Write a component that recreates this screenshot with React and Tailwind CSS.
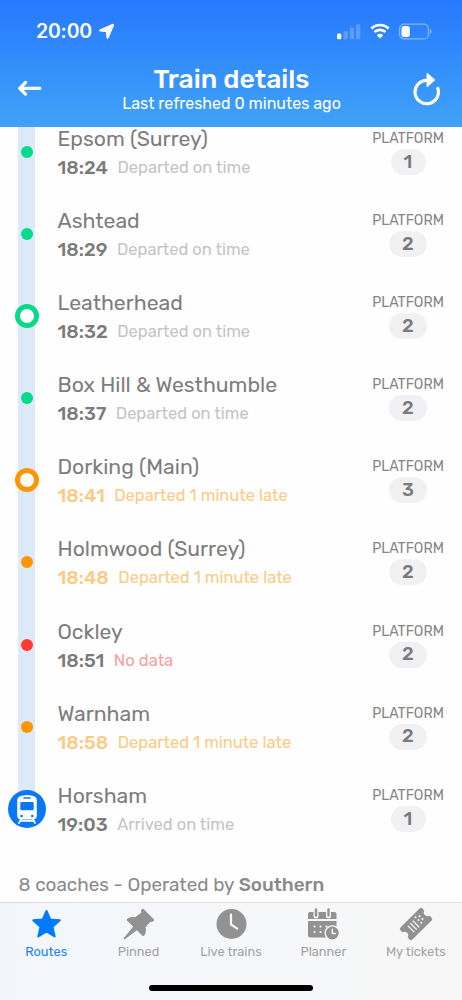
import React from "react";

const stops = [
  { name: "Epsom (Surrey)", time: "18:24", status: "Departed on time", platform: "1", tone: "green" },
  { name: "Ashtead", time: "18:29", status: "Departed on time", platform: "2", tone: "green" },
  { name: "Leatherhead", time: "18:32", status: "Departed on time", platform: "2", tone: "green", ring: true },
  { name: "Box Hill & Westhumble", time: "18:37", status: "Departed on time", platform: "2", tone: "green" },
  { name: "Dorking (Main)", time: "18:41", status: "Departed 1 minute late", platform: "3", tone: "orange", ring: true },
  { name: "Holmwood (Surrey)", time: "18:48", status: "Departed 1 minute late", platform: "2", tone: "orange" },
  { name: "Ockley", time: "18:51", status: "No data", platform: "2", tone: "red" },
  { name: "Warnham", time: "18:58", status: "Departed 1 minute late", platform: "2", tone: "orange" },
  { name: "Horsham", time: "19:03", status: "Arrived on time", platform: "1", tone: "green", last: true },
];

const dotColor = { green: "bg-[#08d98a]", orange: "bg-[#ff9500]", red: "bg-[#ff3b30]" };
const ringColor = { green: "border-[#08d98a]", orange: "border-[#ff9500]" };
const timeColor = { green: "text-[#7b7b7b]", orange: "text-[#fbcb83]", red: "text-[#7b7b7b]" };
const statusColor = { green: "text-[#c4c4c6]", orange: "text-[#fbcb83]", red: "text-[#f8a09c]" };

function TrainBadge() {
  return (
    <svg width="38" height="38" viewBox="0 0 38 38">
      <circle cx="19" cy="19" r="19" fill="#0a78f5" />
      <path d="M15 5.500q4-1 8 0 5.800.9 5.800 4.500v15.500q0 4-4 4H13.200q-4 0-4-4V10q0-3.600 5.800-4.500Z" fill="#fff" />
      <path d="M13 29.500 11 33M25 29.500 27 33M12.500 30.800h13" fill="none" stroke="#fff" strokeWidth="1.800" strokeLinecap="round" />
      <rect x="15.200" y="7.200" width="7.600" height="1.500" rx=".75" fill="#0a78f5" />
      <rect x="12.300" y="12" width="13.400" height="8.300" rx="1" fill="#0a78f5" />
      <circle cx="13.700" cy="26" r="1.300" fill="#0a78f5" />
      <circle cx="24.300" cy="26" r="1.300" fill="#0a78f5" />
    </svg>
  );
}

function Timeline({ stop }) {
  return (
    <div className="grid w-[38px] shrink-0 justify-items-center">
      <div className={`col-start-1 row-start-1 w-[16.5px] bg-[#dce9f9] ${stop.last ? "h-[20px]" : "h-full"}`} />
      <div className="col-start-1 row-start-1 flex h-[50px] items-center">
        {stop.last ? (
          <TrainBadge />
        ) : stop.ring ? (
          <div className={`size-6 rounded-full border-[5px] bg-white ${ringColor[stop.tone]}`} />
        ) : (
          <div className={`size-3 rounded-full ${dotColor[stop.tone]}`} />
        )}
      </div>
    </div>
  );
}

function StopRow({ stop }) {
  return (
    <li className="flex h-[82.1px] pr-[14px] pl-[7.5px]">
      <Timeline stop={stop} />
      <div className="flex-1 pl-3 whitespace-nowrap">
        <div className="h-6 text-[21.2px] leading-[23px] text-[#7d7d7d]">{stop.name}</div>
        <div className="flex h-[34px] items-center gap-[9.5px] leading-8">
          <span className={`text-[19px] font-medium ${timeColor[stop.tone]}`}>{stop.time}</span>
          <span className={`text-[16.5px] ${statusColor[stop.tone]}`}>{stop.status}</span>
        </div>
      </div>
      <div className="flex w-20 flex-col items-center">
        <div className="h-[22px] text-[14.1px] leading-6 text-[#858585]">PLATFORM</div>
        <div className={`flex h-[26px] items-center justify-center rounded-full bg-[#f1f1f3] text-[19px] font-medium text-[#7b7b7b] ${stop.platform === "1" ? "w-[35px]" : "w-[38px]"}`}>
          {stop.platform}
        </div>
      </div>
    </li>
  );
}

function StarIcon() {
  return (
    <svg width="32" height="32" viewBox="0 0 32 32">
      <path d="M16.500 3 20.200 11.500 29.800 12.300 22.500 18.800 24.700 28.500 16.500 23.400 8.300 28.500 10.500 18.800 3.200 12.300 12.800 11.500Z" fill="#007aff" stroke="#007aff" strokeWidth="2" strokeLinejoin="round" />
    </svg>
  );
}

function PinIcon() {
  return (
    <svg width="32" height="32" viewBox="0 0 32 32">
      <path d="M18.800 1.200q1-.9 2 0L30.800 11.200q.9 1-.1 1.900-1.600 1.200-3.600.8l-4.600 5.300q1.300 4.800-1.300 8.300-1 1-2 0l-5.300-5.300L1.500 31.500l-1-1L10.200 18.600 4.200 12.700q-1-1 0-2 3.200-2.200 7.900-1.400l6.100-4.500q-.5-2.300.6-3.600Z" fill="#929292" />
    </svg>
  );
}

function ClockIcon() {
  return (
    <svg width="32" height="32" viewBox="0 0 32 32">
      <circle cx="16.500" cy="16" r="15" fill="#929292" />
      <path d="M16 6.500v10l6.200 4.200" fill="none" stroke="#f7f7f8" strokeWidth="2.200" strokeLinecap="round" strokeLinejoin="round" />
    </svg>
  );
}

function PlannerIcon() {
  return (
    <svg width="32" height="32" viewBox="0 0 32 32">
      <path d="M1 11V6q0-2 2-2h24.500q2 0 2 2v5ZM1 13h28.500v14.500q0 2-2 2H3q-2 0-2-2Z" fill="#929292" />
      <path d="M9 2v6M21.500 2v6" stroke="#f7f7f8" strokeWidth="5" strokeLinecap="round" />
      <path d="M9 1.500v6M21.500 1.500v6" stroke="#929292" strokeWidth="2.400" strokeLinecap="round" />
      <g fill="#f7f7f8">
        <circle cx="7.500" cy="18.500" r="1.100" />
        <circle cx="13.500" cy="18.500" r="1.100" />
        <circle cx="19.500" cy="18.500" r="1.100" />
        <circle cx="7.500" cy="24" r="1.100" />
        <circle cx="13.500" cy="24" r="1.100" />
        <circle cx="25.300" cy="25" r="7.800" />
      </g>
      <circle cx="25.300" cy="25" r="6.400" fill="#929292" />
      <path d="M25.300 21.300v4.200h3" fill="none" stroke="#f7f7f8" strokeWidth="1.500" strokeLinecap="round" strokeLinejoin="round" />
    </svg>
  );
}

function TicketIcon() {
  return (
    <svg width="34" height="34" viewBox="0 0 34 34">
      <g transform="rotate(-45 17 17)">
        <path d="M3.500 8.500h27q2 0 2 2v2.800a3.800 3.800 0 0 0 0 7.400v2.800q0 2-2 2h-27q-2 0-2-2v-2.800a3.800 3.800 0 0 0 0-7.400v-2.800q0-2 2-2Z" fill="#929292" />
        <path d="M10 12.500v9M13.500 12.500v9M17 12.500v9" stroke="#f7f7f8" strokeWidth="1.300" />
        <path d="M21.500 11v12M25 13.200v7.500" stroke="#f7f7f8" strokeWidth="1.800" strokeDasharray="1.800 2.200" />
      </g>
    </svg>
  );
}

const tabs = [
  { label: "Routes", Icon: StarIcon, cls: "text-[#1b83f5]" },
  { label: "Pinned", Icon: PinIcon, cls: "text-[#a3a3a5]" },
  { label: "Live trains", Icon: ClockIcon, cls: "text-[#a3a3a5]" },
  { label: "Planner", Icon: PlannerIcon, cls: "text-[#a3a3a5]" },
  { label: "My tickets", Icon: TicketIcon, cls: "text-[#a3a3a5]" },
];

function StatusBar() {
  return (
    <div className="flex h-[62px] items-center justify-between pr-[30px] pl-9">
      <div className="flex items-center gap-[6px]">
        <span className="pt-[2px] font-['Inter','Roboto',sans-serif] text-[19.5px] font-semibold tracking-[-0.2px]">20:00</span>
        <svg width="17" height="17" viewBox="0 0 17 17">
          <path d="M14.800 1.200 1.600 7q-.6.6.2 1l6.700.5.500 6.600q.5.800 1.100.1L15.700 2q.1-.9-.9-.8Z" fill="#fff" stroke="#fff" strokeWidth="1" strokeLinejoin="round" />
        </svg>
      </div>
      <div className="flex items-center gap-[9px]">
        <svg width="24" height="17" viewBox="0 0 24 17" fill="#fff">
          <rect x="0" y="10.500" width="4.300" height="5.800" rx="1.400" />
          <rect x="6.500" y="8" width="4.300" height="8.300" rx="1.400" opacity=".22" />
          <rect x="12.800" y="4.500" width="4.300" height="11.800" rx="1.400" opacity=".22" />
          <rect x="19" y="1.300" width="4.300" height="15" rx="1.400" opacity=".22" />
        </svg>
        <svg width="20" height="17" viewBox="0 0 20 17">
          <path d="M1.300 5.500a12.600 12.600 0 0 1 17.400 0M4.500 9.100a8 8 0 0 1 11 0" fill="none" stroke="#fff" strokeWidth="2.700" />
          <path d="M6.800 12.300a4.800 4.800 0 0 1 6.400 0L10 15.500Z" fill="#fff" />
        </svg>
        <svg width="33" height="17" viewBox="0 0 33 17">
          <rect x=".6" y="1.100" width="28.800" height="14.800" rx="4.500" fill="none" stroke="#fff" strokeOpacity=".42" strokeWidth="1.200" />
          <rect x="2.500" y="3" width="8.300" height="11" rx="2.500" fill="#fff" />
          <path d="M31 6v5q1.500-.8 1.500-2.500T31 6Z" fill="#fff" opacity=".45" />
        </svg>
      </div>
    </div>
  );
}

export default function App() {
  return (
    <div className="flex h-[1000px] w-[462px] flex-col overflow-hidden bg-[#fefefe] font-['Rubik','Roboto',sans-serif]">
      <header className="h-[127px] shrink-0 bg-linear-to-b from-[#2878fe] to-[#41a2f7] text-white">
        <StatusBar />
        <div className="flex h-[65px] items-start justify-between pr-[21px] pl-[18px]">
          <svg className="mt-[17px]" width="28" height="20" viewBox="0 0 28 20">
            <path d="M7.500 3.500 1.800 9.300 7.500 15.100M2.500 9.300h19.300" fill="none" stroke="#fff" strokeWidth="3.300" strokeLinecap="round" strokeLinejoin="round" />
          </svg>
          <div className="pl-1 text-center whitespace-nowrap">
            <h1 className="text-[26.5px] leading-[34px] font-medium">Train details</h1>
            <p className="text-[16px] leading-[16px]">Last refreshed 0 minutes ago</p>
          </div>
          <svg className="mt-[10px]" width="28" height="34" viewBox="0 0 28 34">
            <path d="M24.900 16.500a11.700 11.700 0 1 1-11.400-8.200" fill="none" stroke="#fff" strokeWidth="3.200" strokeLinecap="round" />
            <path d="M14.300 1.700v12.600l7-6.300Z" fill="#fff" stroke="#fff" strokeWidth="1.500" strokeLinejoin="round" />
          </svg>
        </div>
      </header>
      <main className="h-[775px] shrink-0 overflow-hidden">
        <ul>
          {stops.map((stop) => (
            <StopRow key={stop.name} stop={stop} />
          ))}
        </ul>
        <p className="pt-[5px] pl-[18.5px] text-[18.9px] leading-7 text-[#8a8a8c]">
          8 coaches - Operated by <span className="font-medium">Southern</span>
        </p>
      </main>
      <nav className="h-[98px] shrink-0 border-t border-[#dedfe1] bg-linear-to-r from-[#f2f6fb] via-[#f6f7f9] to-[#f7f7f7]">
        <div className="flex h-[86px]">
          {tabs.map(({ label, Icon, cls }) => (
            <div key={label} className="flex flex-1 flex-col items-center">
              <div className="flex h-[41px] items-center pt-[1px]">
                <Icon />
              </div>
              <span className={`text-[12.8px] leading-[15px] whitespace-nowrap ${cls}`}>{label}</span>
            </div>
          ))}
        </div>
        <div className="mx-auto -mt-[4px] h-[6px] w-[164px] rounded-full bg-black" />
      </nav>
    </div>
  );
}
